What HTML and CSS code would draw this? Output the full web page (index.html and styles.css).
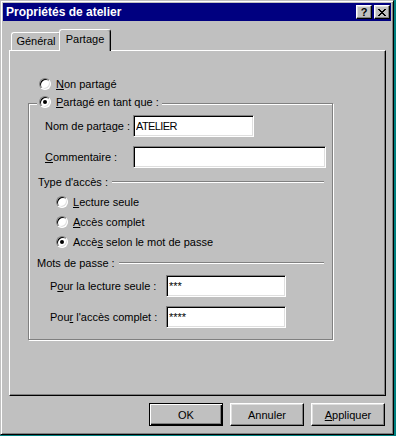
FILE: index.html
```html
<!DOCTYPE html>
<html lang="fr">
<head>
    <meta charset="UTF-8">
    <title>Propriétés de atelier</title>
    <link rel="stylesheet" href="styles.css">
</head>
<body>
    <div class="window">
        <div class="titlebar">
            <span class="title">Propriétés de atelier</span>
            <div class="caption-buttons">
                <span class="cap-btn help">?</span>
                <span class="cap-btn">
                    <svg width="8" height="7" viewBox="0 0 8 7"><path d="M0 0h2v1H0zM6 0h2v1H6zM1 1h2v1H1zM5 1h2v1H5zM2 2h4v1H2zM3 3h2v1H3zM2 4h4v1H2zM1 5h2v1H1zM5 5h2v1H5zM0 6h2v1H0zM6 6h2v1H6z" fill="#000"/></svg>
                </span>
            </div>
        </div>

        <div class="tabs">
            <div class="tab">Général</div>
            <div class="tab active">Partage</div>
        </div>

        <div class="panel">
            <div class="option-row top-option">
                <span class="radio"></span>
                <span><u>N</u>on partagé</span>
            </div>

            <div class="group">
                <div class="option-row group-title">
                    <span class="radio checked"></span>
                    <span><u>P</u>artagé en tant que :</span>
                </div>

                <div class="field-row first">
                    <label class="share-label">Nom de par<u>t</u>age :</label>
                    <input class="edit edit-name" type="text" value="ATELIER">
                </div>
                <div class="field-row second">
                    <label class="share-label"><u>C</u>ommentaire :</label>
                    <input class="edit edit-comment" type="text" value="">
                </div>

                <div class="section access">
                    <span>Type d'accès :</span>
                    <span class="line"></span>
                </div>
                <div class="option-row access-option">
                    <span class="radio"></span>
                    <span><u>L</u>ecture seule</span>
                </div>
                <div class="option-row access-option">
                    <span class="radio"></span>
                    <span><u>A</u>ccès complet</span>
                </div>
                <div class="option-row access-option">
                    <span class="radio checked"></span>
                    <span>Accè<u>s</u> selon le mot de passe</span>
                </div>

                <div class="section passwords">
                    <span>Mots de passe :</span>
                    <span class="line"></span>
                </div>
                <div class="field-row pass-first">
                    <label class="pass-label">P<u>o</u>ur la lecture seule :</label>
                    <input class="edit edit-pass" type="text" value="***">
                </div>
                <div class="field-row second">
                    <label class="pass-label">Pou<u>r</u> l'accès complet :</label>
                    <input class="edit edit-pass" type="text" value="****">
                </div>
            </div>
        </div>

        <div class="buttons">
            <button class="btn default">OK</button>
            <button class="btn">Annuler</button>
            <button class="btn"><u>A</u>ppliquer</button>
        </div>
    </div>
</body>
</html>
```

FILE: styles.css
```css
body { margin: 0; background: #008080; font-family: "Liberation Sans", Arial, sans-serif; font-size: 11px; color: #000; }
u { text-decoration: underline; text-underline-offset: 1px; }

.window { width: 394px; height: 435px; box-sizing: border-box; padding: 2px; background: #c0c0c0; border: 1px solid; border-color: #c0c0c0 #000 #000 #c0c0c0; box-shadow: inset 1px 1px #fff, inset -1px -1px #808080; }

.titlebar { height: 18px; display: flex; align-items: center; justify-content: space-between; padding: 0 1px 0 3px; background: #000080; color: #fff; }
.title { font-weight: bold; font-size: 12px; }
.caption-buttons { display: flex; gap: 2px; }
.cap-btn { width: 16px; height: 14px; box-sizing: border-box; display: flex; align-items: center; justify-content: center; background: #c0c0c0; border: 1px solid; border-color: #fff #000 #000 #fff; box-shadow: inset -1px -1px #808080, inset 1px 1px #dfdfdf; color: #000; }
.cap-btn.help { font-weight: bold; font-size: 11px; line-height: 12px; }

.tabs { display: flex; align-items: flex-end; height: 21px; margin: 8px 0 0 6px; padding-left: 2px; }
.tab { width: 50px; height: 18px; box-sizing: border-box; border: 1px solid; border-bottom: none; border-color: #fff #000 #000 #fff; border-radius: 3px 3px 0 0; box-shadow: inset -1px 0 #808080; text-align: center; line-height: 16px; background: #c0c0c0; }
.tab.active { width: 52px; height: 22px; margin: 0 -2px -1px -2px; line-height: 18px; position: relative; z-index: 1; }

.panel { width: 377px; height: 346px; box-sizing: border-box; margin-left: 6px; padding: 25px 0 0 18px; border: 1px solid; border-color: #fff #000 #000 #fff; box-shadow: inset -1px -1px #808080; }

.option-row { display: flex; align-items: center; gap: 4px; height: 16px; }
.top-option { margin-left: 11px; }
.radio { width: 12px; height: 12px; box-sizing: border-box; border-radius: 50%; background: #fff; border: 1px solid; border-color: #808080 #fff #fff #808080; box-shadow: inset 1px 1px #000, inset -1px -1px #dfdfdf; display: flex; align-items: center; justify-content: center; margin-right: 1px; }
.radio.checked::after { content: ""; width: 4px; height: 4px; border-radius: 50%; background: #000; }

.group { width: 305px; height: 237px; box-sizing: border-box; margin-top: 11px; border: 1px solid #808080; box-shadow: inset 1px 1px #fff, 1px 1px #fff; }
.group-title { width: max-content; margin: -10px 0 0 8px; padding: 0 3px 0 2px; background: #c0c0c0; }

.field-row { display: flex; align-items: center; }
.field-row.first { margin-top: 5px; }
.field-row.second { margin-top: 9px; }
.field-row.pass-first { margin-top: 4px; }
.share-label { width: 88px; margin-left: 16px; }
.pass-label { width: 116px; margin-left: 21px; }

.edit { height: 22px; box-sizing: border-box; margin: 0; padding: 0 2px; font-family: inherit; font-size: 11px; color: #000; background: #fff; border: 1px solid; border-color: #808080 #fff #fff #808080; box-shadow: inset 1px 1px #000, inset -1px -1px #dfdfdf; outline: none; }
.edit-name { width: 121px; letter-spacing: -0.6px; }
.edit-comment { width: 193px; }
.edit-pass { width: 120px; }

.section { display: flex; align-items: center; height: 16px; }
.section.access { margin: 6px 0 0 9px; }
.section.passwords { margin: 5px 0 0 8px; }
.line { flex: 1; height: 0; border-top: 1px solid #808080; border-bottom: 1px solid #fff; margin: 0 8px 0 4px; }
.access-option { margin: 4px 0 0 27px; }

.buttons { display: flex; justify-content: flex-end; gap: 7px; margin-top: 7px; padding-right: 6px; }
.btn { width: 74px; height: 23px; box-sizing: border-box; margin: 0; padding: 0; font-family: inherit; font-size: 11px; color: #000; background: #c0c0c0; border: 1px solid; border-color: #fff #000 #000 #fff; box-shadow: inset -1px -1px #808080, inset 1px 1px #dfdfdf; }
.btn.default { border-color: #000; box-shadow: inset 1px 1px #fff, inset -1px -1px #000, inset -2px -2px #808080; }
```
